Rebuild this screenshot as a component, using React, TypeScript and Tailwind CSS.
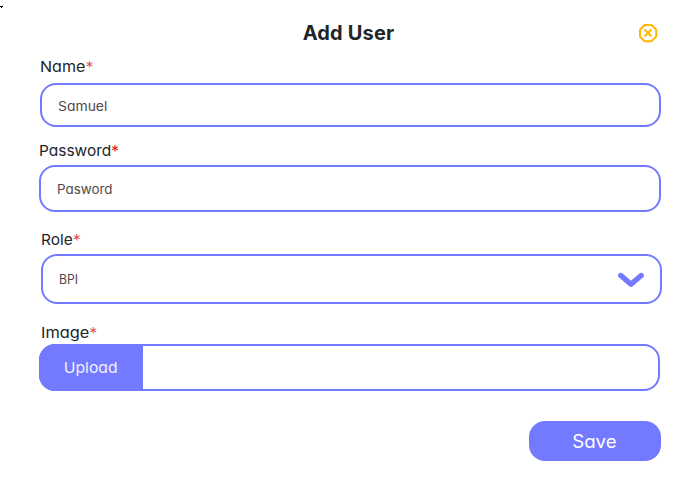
import type { ReactNode } from "react";

type LabelProps = { text: string; className: string; stretch: string; star?: string };

function Label({ text, className, stretch, star = "font-light text-[#e2354a]" }: LabelProps) {
  return (
    <label className={`flex h-5 items-center text-[15px] leading-5 whitespace-nowrap text-[#212529] ${className}`}>
      <span className={`origin-left ${stretch}`}>{text}</span>
      <span className={`text-base leading-5 ${star}`}>*</span>
    </label>
  );
}

function Field({ className, children }: { className: string; children?: ReactNode }) {
  return (
    <div className={`flex items-center rounded-2xl border-2 border-[#747aff] bg-white text-[13px] leading-5 text-[#534747] ${className}`}>
      {children}
    </div>
  );
}

export default function App() {
  return (
    <main className="flex h-[488px] w-[697px] flex-col overflow-hidden bg-white font-['Inter',sans-serif] [font-feature-settings:'cv11']">
      <header className="grid h-[57px] grid-cols-[1fr_auto_1fr] items-start">
        <svg className="mt-1.5 h-[3px] w-[3px]" viewBox="0 0 3 3" fill="#000" aria-hidden="true">
          <path d="M0 0h3v1H0zM1 1h1v1H1z" />
        </svg>
        <h1 className="mt-[19px] text-xl leading-7 font-bold tracking-[0.15px] text-[#212529]">Add User</h1>
        <button type="button" aria-label="Close" className="mt-[23px] mr-[39px] justify-self-end">
          <svg className="h-5 w-5" viewBox="0 0 20 20" fill="none" stroke="#ffb700" strokeWidth="2">
            <path d="M6.6 2h6.8L18.2 6.8v6.8l-4.8 4.6H6.6L2 13.6V6.8z" strokeLinejoin="round" />
            <path d="m6.5 6.5 7 7m0-7-7 7" />
          </svg>
        </button>
      </header>

      <Label text="Name" className="ml-10 gap-[3px]" stretch="scale-x-[1.07]" />
      <Field className="mt-1.5 ml-10 h-11 w-[621px] pt-0.5 pl-4">
        <span className="origin-left scale-x-[1.07]">Samuel</span>
      </Field>

      <Label text="Password" className="mt-3.5 ml-[39px] gap-0.5" stretch="scale-x-[1.03]" star="font-normal text-[#dd1c1c]" />
      <Field className="mt-1 ml-[39px] h-[47px] w-[622px] pt-px pl-4">
        <span className="origin-left scale-x-[1.03]">Pasword</span>
      </Field>

      <Label text="Role" className="mt-[18px] ml-[41px] gap-px" stretch="scale-x-[1.03]" />
      <Field className="mt-1 ml-[41px] h-[50px] w-[621px] justify-between pr-4 pl-4">
        <span className="origin-left scale-x-[0.93]">BPI</span>
        <svg className="mt-0.5 h-4 w-[26px]" viewBox="0 0 26 16" fill="none" stroke="#747aff" strokeWidth="5.4" strokeLinecap="round" strokeLinejoin="round" aria-hidden="true">
          <path d="M2.8 3.5 13 12.3 23.2 3.5" />
        </svg>
      </Field>

      <Label text="Image" className="mt-[19px] ml-[41px] gap-1" stretch="scale-x-[1.09]" />
      <Field className="mt-px ml-[39px] h-[47px] w-[621px]">
        <button type="button" className="-ml-0.5 h-[47px] w-[104px] shrink-0 rounded-l-2xl bg-[#747aff] text-[15px] text-[#f0efff]">
          <span className="inline-block scale-x-[1.05]">Upload</span>
        </button>
      </Field>

      <button type="button" className="mt-[30px] ml-[529px] h-10 w-[132px] rounded-2xl bg-[#747aff] pt-0.5 pr-0.5 text-lg text-white">
        <span className="inline-block scale-x-[1.04]">Save</span>
      </button>
    </main>
  );
}
